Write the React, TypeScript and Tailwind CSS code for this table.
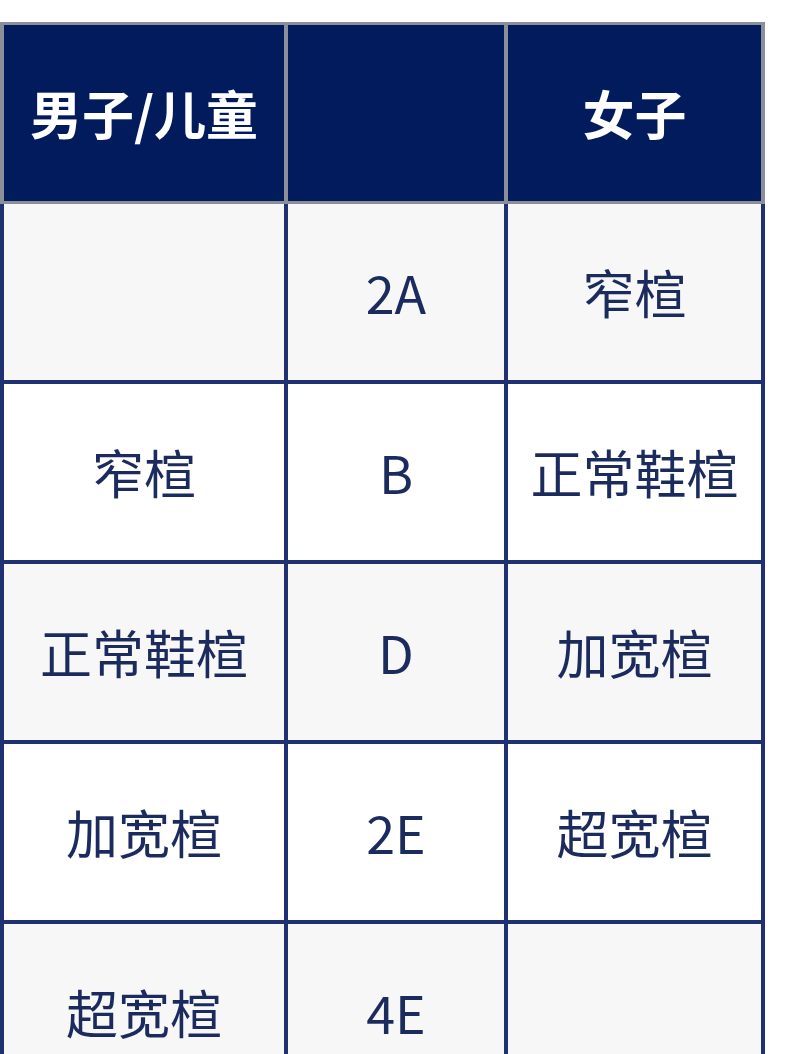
import React from 'react';

type Row = [string, string, string];

const rows: Row[] = [
  ['', '2A', '窄楦'],
  ['窄楦', 'B', '正常鞋楦'],
  ['正常鞋楦', 'D', '加宽楦'],
  ['加宽楦', '2E', '超宽楦'],
  ['超宽楦', '4E', ''],
];

const font = { fontFamily: '"Noto Sans CJK SC", "Noto Sans", sans-serif' };

export default function App() {
  return (
    <div className="min-h-[1054px] bg-white pt-[22px]" style={font}>
      <div className="grid w-[765px] grid-cols-[288px_220px_257px]">
        {/* header */}
        <div className="flex h-[182px] items-center justify-center border-y-[3px] border-x-4 border-[#8b8f99] bg-[#011b5d] text-[52px] font-bold text-white">
          男子/儿童
        </div>
        <div className="h-[182px] border-y-[3px] border-r-4 border-[#8b8f99] bg-[#011b5d]" />
        <div className="flex h-[182px] items-center justify-center border-y-[3px] border-r-4 border-[#8b8f99] bg-[#011b5d] text-[52px] font-bold text-white">
          女子
        </div>

        {/* body */}
        {rows.map((row, i) => (
          <React.Fragment key={i}>
            {row.map((cell, j) => (
              <div
                key={j}
                className={`flex h-[180px] items-center justify-center border-b-4 border-r-4 border-[#1f3172] text-[52px] text-[#1c2b5e] ${
                  j === 0 ? 'border-l-4' : ''
                } ${i % 2 === 0 ? 'bg-[#f7f7f7]' : 'bg-white'}`}
              >
                {cell}
              </div>
            ))}
          </React.Fragment>
        ))}
      </div>
    </div>
  );
}
